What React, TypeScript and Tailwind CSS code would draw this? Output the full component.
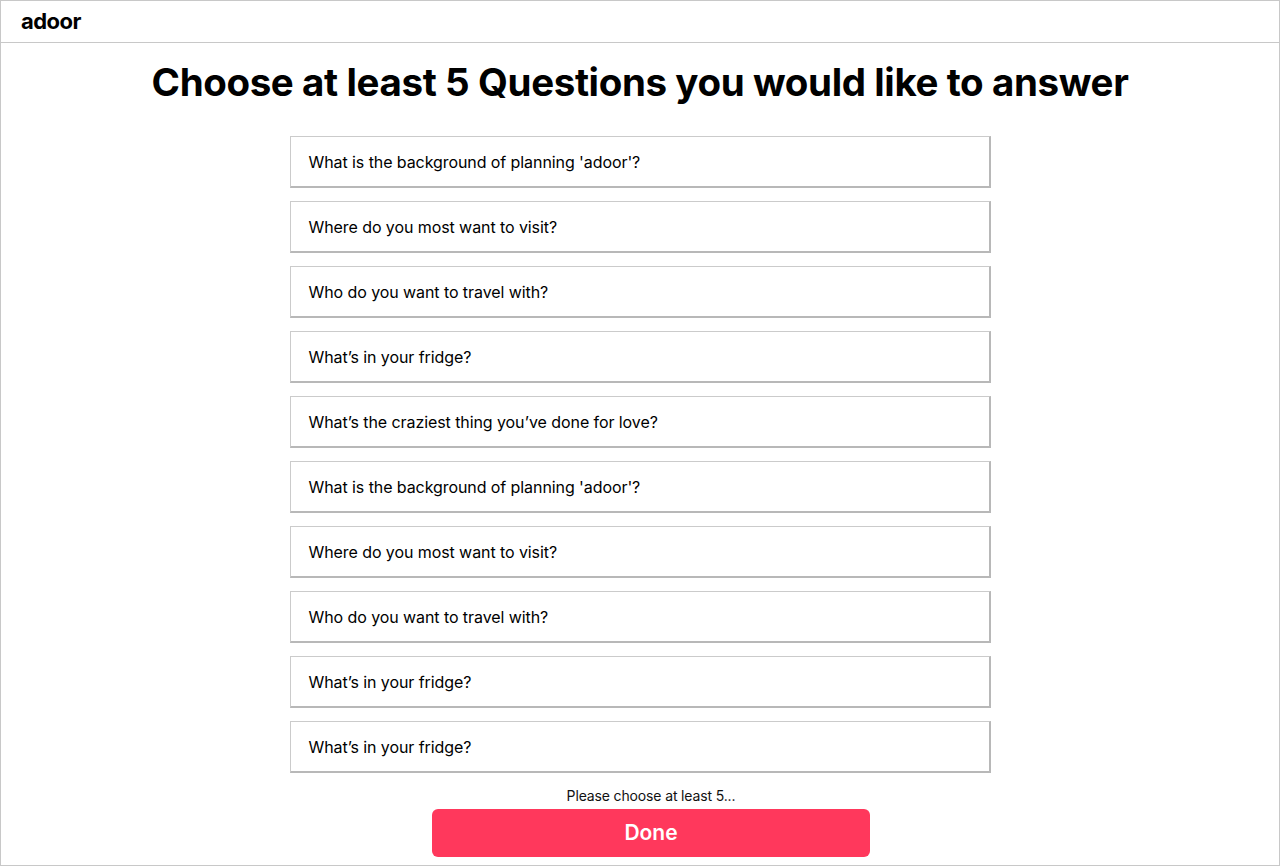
const questions = [
  "What is the background of planning 'adoor'?",
  "Where do you most want to visit?",
  "Who do you want to travel with?",
  "What’s in your fridge?",
  "What’s the craziest thing you’ve done for love?",
  "What is the background of planning 'adoor'?",
  "Where do you most want to visit?",
  "Who do you want to travel with?",
  "What’s in your fridge?",
  "What’s in your fridge?",
];

const App = () => {
  return (
    <div
      className="h-[866px] w-[1280px] border border-[#c8c8c8] bg-white text-black"
      style={{ fontFamily: "Inter, 'Noto Sans', sans-serif" }}
    >
      <header className="flex h-[42px] items-center border-b border-[#c8c8c8] px-5">
        <span className="text-[22px] font-bold tracking-tight">adoor</span>
      </header>
      <h1 className="mt-[14px] text-center text-[38.5px] font-bold leading-[50px] tracking-[-0.01em]">
        Choose at least 5 Questions you would like to answer
      </h1>
      <div className="mt-[29px] flex flex-col items-center gap-[13px]">
        {questions.map((q, i) => (
          <div
            key={i}
            className="flex h-[52px] w-[701px] items-center border border-[#cbcbcb] border-r-2 border-b-2 border-r-[#b8b8b8] border-b-[#b8b8b8] px-[18px] text-[16px] tracking-[-0.005em]"
          >
            {q}
          </div>
        ))}
      </div>
      <p className="mt-[14px] pl-[22px] text-center text-[14px] leading-[18px] tracking-[-0.01em] text-[#111]">
        Please choose at least 5...
      </p>
      <div className="mt-[4px] flex justify-center pl-[22px]">
        <button className="h-[48px] w-[438px] rounded-[6px] bg-[#ff385c] text-[21px] font-semibold text-white">
          Done
        </button>
      </div>
    </div>
  );
};

export default App;
